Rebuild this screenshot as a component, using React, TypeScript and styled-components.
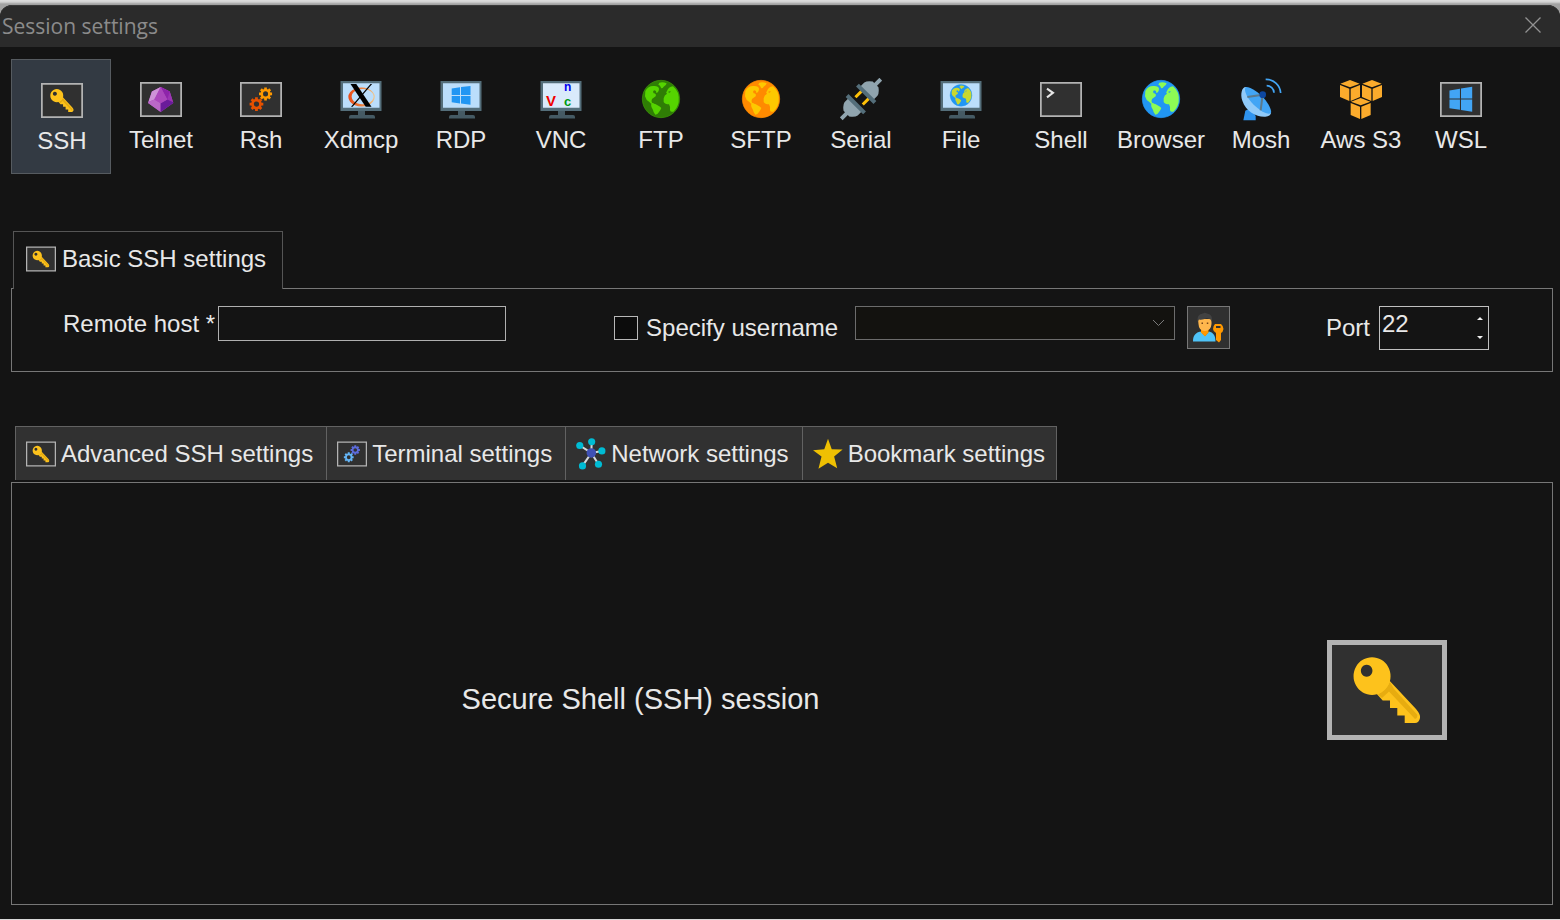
import React, { useState } from "react";
import styled, { createGlobalStyle } from "styled-components";

const GlobalStyle = createGlobalStyle`
  * { box-sizing: border-box; }
  body {
    margin: 0;
    background: #d9d9d9;
    color: #e8e8e8;
    font-family: "Liberation Sans", Arial, sans-serif;
    font-size: 24px;
    line-height: 28px;
  }
  button, input, select { font: inherit; color: inherit; }
`;

/* ---------- layout parts ---------- */

const Desktop = styled.div`
  display: flex;
  flex-direction: column;
  min-height: 100vh;
  padding: 5px 0 1px;
  background: linear-gradient(#dedede 0, #d2d2d2 2px, #a2a2a2 4px, #a2a2a2 16px, #d9d9d9 17px);
`;

const Window = styled.main`
  flex: 1;
  display: flex;
  flex-direction: column;
  background: #141414;
  border-radius: 12px 12px 0 0;
`;

const TitleBar = styled.header`
  display: flex;
  align-items: center;
  justify-content: space-between;
  height: 42px;
  padding: 0 19px 2px 2px;
  background: #2b2b2b;
  border-top: 1px solid #3a3a3a;
  border-radius: 12px 12px 0 0;
`;

const Title = styled.h1`
  margin: 0;
  font: 400 21px/28px "Open Sans", "Noto Sans", sans-serif;
  color: #8b8b8b;
`;

const CloseButton = styled.button`
  display: flex;
  padding: 0;
  border: 0;
  background: none;
  margin-bottom: 2px;
`;

const Content = styled.div`
  flex: 1;
  display: flex;
  flex-direction: column;
  padding: 12px 7px 14px 11px;
`;

const Toolbar = styled.nav`
  display: flex;
  margin-bottom: 57px;
`;

const ToolButton = styled.button<{ $active: boolean }>`
  flex: 0 1 100px;
  min-width: 0;
  height: 115px;
  display: flex;
  flex-direction: column;
  align-items: center;
  gap: 5px;
  padding: ${(p) => (p.$active ? "19px 0 0 2px" : "18px 0 0")};
  border: 1px solid ${(p) => (p.$active ? "#565b60" : "transparent")};
  background: ${(p) => (p.$active ? "#333a43" : "transparent")};
  white-space: nowrap;
`;

const IconSlot = styled.span`
  display: flex;
  align-items: center;
  justify-content: center;
  width: 42px;
  height: 43px;
`;

const ActiveTab = styled.button`
  position: relative;
  align-self: flex-start;
  display: flex;
  align-items: center;
  gap: 6px;
  height: 58px;
  margin: 0 0 -1px 2px;
  padding: 0 16px 3px 12px;
  border: 1px solid #555555;
  border-bottom: 0;
  background: #141414;
`;

const HostPanel = styled.form`
  display: flex;
  align-items: flex-start;
  height: 84px;
  margin-bottom: 54px;
  padding: 17px 63px 0 51px;
  border: 1px solid #777777;
`;

const Field = styled.div`
  display: flex;
  align-items: center;
  white-space: nowrap;
`;

const HostField = styled(Field)`
  gap: 3px;
`;

const UserField = styled(Field)`
  flex: 1;
  height: 43px;
  margin: 0 96px 0 108px;
`;

const PortField = styled(Field)`
  gap: 9px;
`;

const HostInput = styled.input`
  width: 288px;
  height: 35px;
  padding: 0 4px;
  border: 1px solid #b0b0b0;
  background: #141414;
  outline: 0;
`;

const CheckBox = styled.input`
  appearance: none;
  width: 24px;
  height: 24px;
  margin: 0 8px 0 0;
  border: 1px solid #b8b8b8;
  background: #0c0c0c;
`;

const SelectWrap = styled.div`
  position: relative;
  flex: 1;
  align-self: flex-start;
  margin: 0 12px 0 17px;
  height: 34px;

  svg {
    position: absolute;
    right: 10px;
    top: 13px;
  }
`;

const UserSelect = styled.select`
  appearance: none;
  display: block;
  width: 100%;
  height: 100%;
  border: 1px solid #6c6c6c;
  background: #13120f;
  opacity: 1;
`;

const UserButton = styled.button`
  display: flex;
  align-items: center;
  justify-content: center;
  width: 43px;
  height: 43px;
  padding: 0;
  border: 1px solid #777777;
  background: #303030;
`;

const Spinner = styled.div`
  display: flex;
  width: 110px;
  height: 44px;
  border: 1px solid #c0c0c0;
`;

const PortInput = styled.input`
  flex: 1;
  min-width: 0;
  height: 33px;
  padding: 0 2px;
  border: 0;
  background: none;
  outline: 0;
`;

const Steps = styled.div`
  display: flex;
  flex-direction: column;
  width: 17px;
  padding: 2px 0;
`;

const StepButton = styled.button`
  flex: 1;
  display: flex;
  align-items: center;
  justify-content: center;
  padding: 0;
  border: 0;
  background: none;
`;

const TabStrip = styled.div`
  display: flex;
  margin: 0 0 2px 4px;
`;

const SettingsTab = styled.button`
  display: flex;
  align-items: center;
  gap: 5px;
  height: 54px;
  padding: 0 13px 0 10px;
  border: 1px solid #626262;
  border-width: 1px 0 0 1px;
  background: #313131;
  white-space: nowrap;

  &:last-child {
    border-right-width: 1px;
    padding-right: 11px;
  }
`;

const SessionPanel = styled.section`
  flex: 1;
  min-height: 160px;
  display: flex;
  align-items: center;
  padding: 0 105px 8px 0;
  border: 1px solid #777777;
`;

const SessionTitle = styled.h2`
  flex: 1;
  margin: 0 58px 0 0;
  padding-top: 18px;
  font-size: 29px;
  line-height: 34px;
  font-weight: 400;
  text-align: center;
`;

/* ---------- icons ---------- */

type IconProps = { width?: number; height?: number };

const Framed = ({ width = 42, height = 35, children }: IconProps & { children?: React.ReactNode }) => (
  <svg width={width} height={height} viewBox="0 0 120 100" aria-hidden="true">
    <rect x="2.5" y="2.5" width="115" height="95" fill="#303030" stroke="#b3b3b3" strokeWidth="5" />
    {children}
  </svg>
);

const KeyIcon = (p: IconProps) => (
  <Framed {...p}>
    <path
      fill="#fdc21c"
      d="M60 38L89 69Q94 75 93 78Q92 83 88 83H77.700V75.500H70.300V68H63V60.500H55.700L48 52Z"
    />
    <path fill="#e7ac10" d="M51 54.500Q59 50 63 42L67 49L90.500 75Q90.500 78 88 79L62 51.500L55 58Z" />
    <path
      fill="#fdc21c"
      fillRule="evenodd"
      d="M45 17.300a18.500 18.800 0 1 0 .1 0ZM39.700 24.700a5.800 6 0 1 1 -.1 0Z"
    />
  </Framed>
);

const GemIcon = () => (
  <Framed>
    <path fill="#ab47bc" d="M59 14L85 27L95 60L59 86L23 60L34 27Z" />
    <path fill="#ce93d8" d="M59 14L34 27L24 57L41 50Z" />
    <path fill="#9c35b4" d="M59 14L85 27L95 59L78 50Z" />
    <path fill="#8e24aa" d="M59 14L85 27L78 50Z" />
    <path fill="#ba68c8" d="M24 57L41 50L59 61V86L23 60Z" />
    <path fill="#6a1b9a" d="M95 58L78 50L59 61V86L95 60Z" />
    <path fill="#ab47bc" d="M59 14L41 50L59 61L78 50Z" />
  </Framed>
);

const gearPath = (cx: number, cy: number, r: number) => {
  const teeth = 8;
  const inner = r * 0.76;
  const points: string[] = [];
  for (let i = 0; i < teeth; i++) {
    const a = (i / teeth) * Math.PI * 2 - Math.PI / 2;
    [
      [-0.27, inner],
      [-0.2, r],
      [0.2, r],
      [0.27, inner],
    ].forEach(([d, rad]) => {
      points.push(`${(cx + rad * Math.cos(a + d)).toFixed(2)} ${(cy + rad * Math.sin(a + d)).toFixed(2)}`);
    });
  }
  const h = r * 0.38;
  return `M${points.join("L")}ZM${cx - h} ${cy}a${h} ${h} 0 1 0 ${2 * h} 0a${h} ${h} 0 1 0 ${-2 * h} 0Z`;
};

const GearsIcon = ({ upper, lower, ...p }: IconProps & { upper: string; lower: string }) => (
  <Framed {...p}>
    <path fill={upper} fillRule="evenodd" d={gearPath(73, 34, 19)} />
    <path fill={lower} fillRule="evenodd" d={gearPath(47, 63, 20)} />
  </Framed>
);

const ShellIcon = () => (
  <Framed>
    <path d="M20 19L37 31L20 44" fill="none" stroke="#e6e6e6" strokeWidth="6" />
  </Framed>
);

const WslIcon = () => (
  <Framed>
    <path
      fill="#42a5f5"
      d="M27 24L57 19V47H27ZM60 18.500L92 13.500V47H60ZM27 50H57V79L27 75ZM60 50H92V85L60 80Z"
    />
  </Framed>
);

const Monitor = ({ screen = "#bbdefb", children }: { screen?: string; children: React.ReactNode }) => (
  <svg width="42" height="43" viewBox="0 0 42 43" aria-hidden="true">
    <path fill="#455a64" d="M18 32h7v5h8q2 0 2 2v1.500H9V39q0-2 2-2h7Z" />
    <path fill="#546e7a" d="M0.500 3h41v30h-41Z" />
    <path fill={screen} d="M3 5.300h36.500v24.500H3Z" />
    {children}
  </svg>
);

const XdmcpIcon = () => (
  <Monitor>
    <defs>
      <linearGradient id="xring" x1="0" x2="1">
        <stop offset="0" stopColor="#ea4a17" />
        <stop offset="0.6" stopColor="#ee8a45" />
        <stop offset="1" stopColor="#f2c98c" />
      </linearGradient>
    </defs>
    <path
      fill="url(#xring)"
      fillRule="evenodd"
      d="M21.500 9.500a13.200 9.500 0 1 0 .1 0ZM22.700 11a11 7.600 0 1 1-.1 0Z"
    />
    <path d="M10.500 6h5.800L31.500 28.800h-5.800Z" />
    <path d="M30.500 6h1.600L12.600 28.800h-1.600Z" />
  </Monitor>
);

const RdpIcon = () => (
  <Monitor>
    <path
      fill="#2196f3"
      d="M11.700 10.500L20 9.200V17H11.700ZM21 9L30.500 7.900V17H21ZM11.700 18H20V25.400L11.700 24.300ZM21 18H30.500V26.800L21 25.600Z"
    />
  </Monitor>
);

const VncIcon = () => (
  <Monitor screen="#d9eafb">
    <g fontWeight="700" fontFamily="'Liberation Sans', sans-serif">
      <text x="6" y="28" fontSize="15" fill="#f00000">V</text>
      <text x="24" y="27.500" fontSize="13" fill="#009a10">c</text>
      <text x="24" y="13" fontSize="12" fill="#0000f0">n</text>
    </g>
  </Monitor>
);

/* Globe drawn around 0,0 with a radius of 57 */
const Globe = ({ sea, land, rim }: { sea: string; land: string; rim?: string }) => (
  <g>
    <circle r="56" fill={sea} stroke={rim || sea} strokeWidth="2" />
    <g fill={land}>
      <path d="M-5 -49Q6 -52 17 -47Q15 -39 8 -37Q3 -29 0 -34Q-2 -41 -8 -43Z" />
      <path d="M-47 -24Q-38 -40 -22 -39Q-8 -40 -6 -31Q-6 -21 -14 -18Q-13 -25 -20 -26Q-26 -24 -22 -17Q-13 -16 -16 -8L-27 0Q-30 6 -27 11Q-22 12 -20 15Q-28 18 -35 9Q-45 4 -48 -8Z" />
      <path d="M-30 16Q-20 12 -13 17Q-2 22 1 27Q-1 33 -6 39Q-10 47 -17 47Q-23 41 -24 33Q-30 26 -30 16Z" />
      <path d="M8 -2Q10 -12 18 -16Q13 -19 18 -24Q22 -36 36 -38Q45 -31 51 -18Q55 -6 53 10Q49 28 37 38Q29 40 27 34Q29 24 24 16Q12 16 8 9Z" />
    </g>
    <path fill={sea} d="M20 -21L29 -24L27 -19Z" />
  </g>
);

const GlobeIcon = (p: { sea: string; land: string; rim?: string }) => (
  <svg width="42" height="43" viewBox="-63 -63 126 129" aria-hidden="true">
    <Globe {...p} />
  </svg>
);

const FileIcon = () => (
  <Monitor>
    <g transform="translate(21 17.300) scale(.195)">
      <Globe sea="#2196f3" land="#c9d82f" />
    </g>
  </Monitor>
);

const SerialIcon = () => (
  <svg width="42" height="43" viewBox="-63 -63 126 129" aria-hidden="true">
    <g transform="rotate(45)">
      <g fill="#90a4ae">
        <path d="M-28 -24V-42Q-26 -52 -12 -62H-6V-84H6V-62H12Q26 -52 28 -42V-24Z" />
        <path d="M-28 24V42Q-26 52 -12 62H-6V84H6V62H12Q26 52 28 42V24Z" />
      </g>
      <path fill="#ffc107" d="M-20 -18H-11V8H-20ZM11 -18H20V8H11Z" />
      <path fill="#546e7a" d="M-37 -28H37V-16H-37ZM-37 16H37V28H-37Z" />
    </g>
  </svg>
);

const MoshIcon = () => (
  <svg width="42" height="43" viewBox="60 54 126 129" aria-hidden="true">
    <path fill="#2f93ee" d="M70 181L76 152L92 144L107 168V181Z" />
    <path fill="#90caf9" d="M78 81C66 80 60 102 67 122C78 155 112 172 136 170Q152 168 153 159Z" />
    <path fill="#42a5f5" d="M77 81C92 80 118 98 133 116C148 134 157 154 152 160C142 165 120 152 101 134C82 115 70 92 77 81Z" />
    <path d="M82 111L128 104L122 151" fill="none" stroke="#5c7a8c" strokeWidth="6" />
    <circle cx="128" cy="104" r="10" fill="#0d47a1" />
    <path d="M137 58A44 44 0 0 1 182 99M140 77A22 22 0 0 1 162 98" fill="none" stroke="#42a5f5" strokeWidth="5" />
  </svg>
);

const CUBE = "M389 60L418 71L389 82L360 71ZM359 75L387 86V123L359 111ZM391 86L419 75V111L391 123Z";

const AwsIcon = () => (
  <svg width="42" height="43" viewBox="359 54 126 129" aria-hidden="true">
    <g fill="#fbab2c">
      <path d={CUBE} />
      <path d={CUBE} transform="translate(66 0)" />
      <path d={CUBE} transform="translate(32 54)" />
    </g>
  </svg>
);

const UserKeyIcon = () => (
  <svg width="33" height="33" viewBox="0 0 33 33" aria-hidden="true">
    <path fill="#4fc3f7" d="M1 30.500C1 24 4 21.500 8.500 20.500L13 25L17 20.500C21 21.500 23.500 24 23.500 30.500Z" />
    <path fill="#ff9800" d="M9 16H16.500V21.500L13 25.500L9 21.500Z" />
    <path fill="#ffb74d" d="M6 8H19.500V13Q19 20 12.800 20Q6.800 20 6.500 13Z" />
    <path fill="#424242" d="M5.500 11Q4.500 3 11 2.500Q12.500 1 15 2.500Q21 3 20 11L18.500 8.500L15 7Q10 9.500 7 8.500Z" />
    <path fill="#784719" d="M9.500 11.500h1.500v1.500H9.500ZM14.800 11.500h1.500v1.500h-1.500Z" />
    <path
      fill="#ff9800"
      fillRule="evenodd"
      d="M23 13H29Q31.500 15 31.500 18Q31 21 29 22V29L27 31.500L24 29V22Q21 20 21 18Q21 15 23 13ZM24 15V17H28.500V15Z"
    />
  </svg>
);

const NetworkIcon = () => (
  <svg width="30" height="32" viewBox="138 68 88 94" aria-hidden="true">
    <path
      d="M183 112L149 90M183 112L184 79M183 112L214 106M183 112L204 145M183 112L157 150"
      stroke="#d4dadd"
      strokeWidth="6"
    />
    <g fill="#00bcd4">
      <circle cx="149" cy="90" r="10.500" />
      <circle cx="184" cy="79" r="10.500" />
      <circle cx="214" cy="106" r="10.500" />
      <circle cx="204" cy="145" r="10.500" />
      <circle cx="157" cy="150" r="10.500" />
    </g>
    <circle cx="183" cy="112" r="14" fill="#3f51b5" />
  </svg>
);

const StarIcon = () => (
  <svg width="30" height="32" viewBox="823 69 88 94" aria-hidden="true">
    <path
      fill="#efc002"
      d="M867 71L878 102L910 103L885 123L894 158L867 142L839 159L848 123L823 105L856 102Z"
    />
  </svg>
);

/* ---------- data ---------- */

const tools: { name: string; icon: React.ReactNode }[] = [
  { name: "SSH", icon: <KeyIcon /> },
  { name: "Telnet", icon: <GemIcon /> },
  { name: "Rsh", icon: <GearsIcon upper="#ff9800" lower="#e65100" /> },
  { name: "Xdmcp", icon: <XdmcpIcon /> },
  { name: "RDP", icon: <RdpIcon /> },
  { name: "VNC", icon: <VncIcon /> },
  { name: "FTP", icon: <GlobeIcon sea="#2f7d05" land="#55d400" rim="#3f9a08" /> },
  { name: "SFTP", icon: <GlobeIcon sea="#ff8a00" land="#fdc800" /> },
  { name: "Serial", icon: <SerialIcon /> },
  { name: "File", icon: <FileIcon /> },
  { name: "Shell", icon: <ShellIcon /> },
  { name: "Browser", icon: <GlobeIcon sea="#2196f3" land="#8dfb55" /> },
  { name: "Mosh", icon: <MoshIcon /> },
  { name: "Aws S3", icon: <AwsIcon /> },
  { name: "WSL", icon: <WslIcon /> },
];

const settingsTabs: { name: string; icon: React.ReactNode }[] = [
  { name: "Advanced SSH settings", icon: <KeyIcon width={30} height={26} /> },
  { name: "Terminal settings", icon: <GearsIcon width={30} height={26} upper="#5c6bdc" lower="#64b5f6" /> },
  { name: "Network settings", icon: <NetworkIcon /> },
  { name: "Bookmark settings", icon: <StarIcon /> },
];

export default function App() {
  const [active, setActive] = useState("SSH");
  const [port, setPort] = useState(22);

  return (
    <>
      <GlobalStyle />
      <Desktop>
        <Window>
          <TitleBar>
            <Title>Session settings</Title>
            <CloseButton aria-label="Close">
              <svg width="16" height="16" viewBox="0 0 16 16" aria-hidden="true">
                <path d="M0.500 0.500L15.500 15.500M15.500 0.500L0.500 15.500" stroke="#929292" strokeWidth="1.300" />
              </svg>
            </CloseButton>
          </TitleBar>
          <Content>
            <Toolbar>
              {tools.map((t) => (
                <ToolButton key={t.name} $active={t.name === active} onClick={() => setActive(t.name)}>
                  <IconSlot>{t.icon}</IconSlot>
                  {t.name}
                </ToolButton>
              ))}
            </Toolbar>

            <ActiveTab role="tab" aria-selected="true">
              <KeyIcon width={30} height={26} />
              Basic SSH settings
            </ActiveTab>
            <HostPanel onSubmit={(e) => e.preventDefault()}>
              <HostField>
                <label htmlFor="host">Remote host *</label>
                <HostInput id="host" type="text" />
              </HostField>
              <UserField>
                <CheckBox id="specify" type="checkbox" />
                <label htmlFor="specify">Specify username</label>
                <SelectWrap>
                  <UserSelect aria-label="Username" disabled />
                  <svg width="13" height="8" viewBox="0 0 13 8" aria-hidden="true">
                    <path d="M1 1L6.500 6.500L12 1" fill="none" stroke="#7a7a7a" />
                  </svg>
                </SelectWrap>
                <UserButton type="button" aria-label="Manage users">
                  <UserKeyIcon />
                </UserButton>
              </UserField>
              <PortField>
                <label htmlFor="port">Port</label>
                <Spinner>
                  <PortInput
                    id="port"
                    type="text"
                    inputMode="numeric"
                    value={port}
                    onChange={(e) => setPort(Number(e.target.value) || 0)}
                  />
                  <Steps>
                    <StepButton type="button" aria-label="Increase port" onClick={() => setPort(port + 1)}>
                      <svg width="6" height="3" viewBox="0 0 6 3">
                        <path fill="#f0f0f0" d="M0 3L3 0L6 3Z" />
                      </svg>
                    </StepButton>
                    <StepButton type="button" aria-label="Decrease port" onClick={() => setPort(port - 1)}>
                      <svg width="6" height="3" viewBox="0 0 6 3">
                        <path fill="#f0f0f0" d="M0 0L3 3L6 0Z" />
                      </svg>
                    </StepButton>
                  </Steps>
                </Spinner>
              </PortField>
            </HostPanel>

            <TabStrip role="tablist">
              {settingsTabs.map((t) => (
                <SettingsTab key={t.name} role="tab">
                  {t.icon}
                  {t.name}
                </SettingsTab>
              ))}
            </TabStrip>
            <SessionPanel>
              <SessionTitle>Secure Shell (SSH) session</SessionTitle>
              <KeyIcon width={120} height={100} />
            </SessionPanel>
          </Content>
        </Window>
      </Desktop>
    </>
  );
}
